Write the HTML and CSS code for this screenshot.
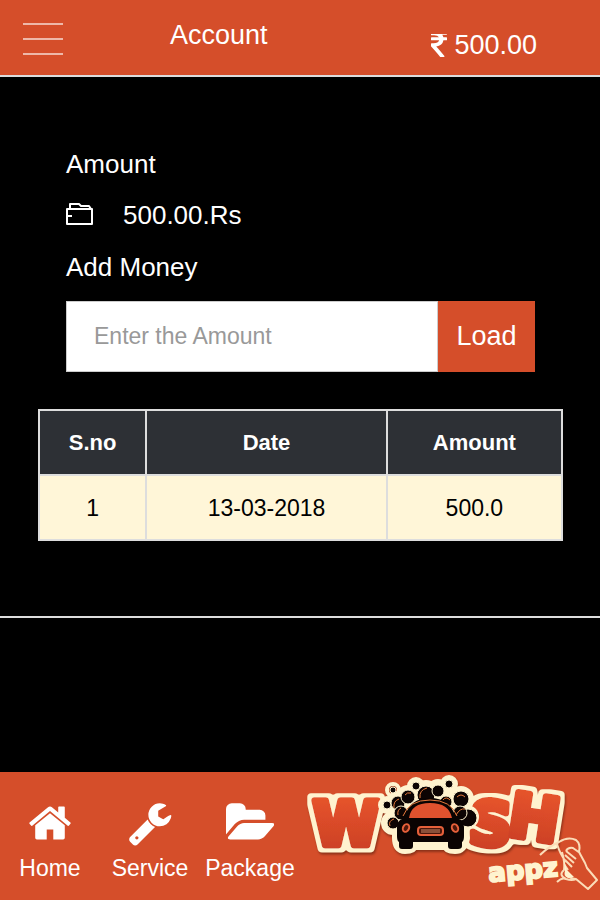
FILE: index.html
```
<!DOCTYPE html>
<html lang="en">
<head>
    <meta charset="UTF-8">
    <meta name="viewport" content="width=device-width, initial-scale=1.0">
    <title>Account</title>
    <link rel="stylesheet" href="styles.css">
</head>
<body>
    <header class="topbar">
        <button class="menu-button" type="button" aria-label="Menu">
            <span></span>
            <span></span>
            <span></span>
        </button>
        <h1>Account</h1>
        <div class="balance">
            <svg class="rupee" viewBox="447 256 898 1280" aria-hidden="true"><path d="M1345 470v102q0 14-9 23t-23 9h-168q-23 144-129 234t-276 110q167 178 459 536 14 16 4 34-8 18-29 18h-195q-16 0-25-12-306-367-498-571-9-9-9-22v-127q0-13 9.500-22.500t22.500-9.500h112q132 0 212.500-43t102.500-125h-427q-14 0-23-9t-9-23v-102q0-14 9-23t23-9h413q-57-113-268-113h-145q-13 0-22.500-9.500t-9.500-22.500v-133q0-14 9-23t23-9h832q14 0 23 9t9 23v102q0 14-9 23t-23 9h-233q47 61 64 144h171q14 0 23 9t9 23z"/></svg>
            <span>500.00</span>
        </div>
    </header>

    <main>
        <section class="wallet">
            <h2>Amount</h2>
            <p class="wallet-amount">
                <svg class="wallet-icon" viewBox="0 0 28 24" aria-hidden="true"><path d="M1 6H26V21H1ZM4 6V1H13L15 3H23L25 6M1 13H6"/></svg>
                500.00.Rs
            </p>
            <label for="amount">Add Money</label>
            <form class="load-form">
                <input type="text" id="amount" placeholder="Enter the Amount">
                <button type="button">Load</button>
            </form>
        </section>

        <!-- Past top-ups -->
        <table class="history">
            <thead>
                <tr>
                    <th class="col-no">S.no</th>
                    <th class="col-date">Date</th>
                    <th>Amount</th>
                </tr>
            </thead>
            <tbody>
                <tr>
                    <td>1</td>
                    <td>13-03-2018</td>
                    <td>500.0</td>
                </tr>
            </tbody>
        </table>
    </main>

    <footer class="bottombar">
        <nav>
            <a href="#home">
                <svg viewBox="0 0 1792 1792" aria-hidden="true"><path d="M1472 992v480q0 26-19 45t-45 19h-384v-384h-256v384h-384q-26 0-45-19t-19-45v-480q0-1 .5-3t.5-3l575-474 575 474q1 2 1 6zm223-69l-62 74q-8 9-21 11h-3q-13 0-21-7l-692-577-692 577q-12 8-24 7-13-2-21-11l-62-74q-8-10-7-23.500t11-21.500l719-599q32-26 76-26t76 26l244 204v-195q0-14 9-23t23-9h192q14 0 23 9t9 23v408l219 182q10 8 11 21.500t-7 23.500z"/></svg>
                Home
            </a>
            <a href="#service">
                <svg viewBox="0 0 1792 1792" aria-hidden="true"><path d="M448 1472q0-26-19-45t-45-19-45 19-19 45 19 45 45 19 45-19 19-45zm644-420l-682 682q-37 37-90 37-52 0-91-37l-106-108q-38-36-38-90 0-53 38-91l681-681q39 98 114.500 173.500t173.500 114.500zm634-435q0 39-23 106-47 134-164.500 217.500t-258.500 83.500q-185 0-316.500-131.500t-131.500-316.500 131.500-316.500 316.500-131.500q58 0 121.500 16.500t107.500 46.500q16 11 16 28t-16 28l-293 169v224l193 107q5-3 79-48.500t135.500-81 70.500-35.500q15 0 23.500 10t8.500 25z"/></svg>
                Service
            </a>
            <a href="#package">
                <svg viewBox="0 0 1879 1792" aria-hidden="true"><path d="M1879 952q0 31-31 66l-336 396q-43 51-120.500 86.500t-143.500 35.500h-1088q-34 0-60.500-13t-26.500-43q0-31 31-66l336-396q43-51 120.500-86.500t143.500-35.500h1088q34 0 60.500 13t26.500 43zm-343-344v160h-832q-94 0-197 47.500t-164 119.500l-337 396-5 6q0-4-.5-12.500t-.5-12.500v-960q0-92 66-158t158-66h320q92 0 158 66t66 158v32h544q92 0 158 66t66 158z"/></svg>
                Package
            </a>
        </nav>
        <svg class="logo" viewBox="0 0 300 128" role="img" aria-label="Wash Appz">
            <defs>
                <linearGradient id="letterFill" x1="0" y1="0" x2="0" y2="1">
                    <stop offset="0" stop-color="#ea572c"/>
                    <stop offset="1" stop-color="#c83d25"/>
                </linearGradient>
                <!-- Pale edge round the letters -->
                <filter id="letterEdge" x="-10%" y="-20%" width="120%" height="140%">
                    <feMorphology in="SourceAlpha" operator="dilate" radius="4"/>
                    <feGaussianBlur stdDeviation="1"/>
                    <feComponentTransfer result="edge">
                        <feFuncA type="linear" slope="3" intercept="-1"/>
                    </feComponentTransfer>
                    <feFlood flood-color="#fff3cf"/>
                    <feComposite in2="edge" operator="in" result="pale"/>
                    <feMerge>
                        <feMergeNode in="pale"/>
                        <feMergeNode in="SourceGraphic"/>
                    </feMerge>
                </filter>
            </defs>
            <g class="logo-shadow">
                <g class="logo-letters">
                    <text x="13" y="73">W</text>
                    <text x="169" y="73" transform="rotate(4 190 50)">S</text>
                    <text x="209" y="67" transform="rotate(9 235 48)">H</text>
                </g>
                <!-- Pale edge behind the bubbles and the car -->
                <g class="logo-edge">
                    <circle cx="93" cy="18" r="2"/>
                    <circle cx="87" cy="33" r="3"/>
                    <circle cx="98" cy="31" r="6"/>
                    <circle cx="108" cy="25" r="6"/>
                    <circle cx="116" cy="14" r="3"/>
                    <circle cx="126" cy="22" r="8"/>
                    <circle cx="138" cy="19" r="6"/>
                    <circle cx="149" cy="12" r="3"/>
                    <circle cx="161" cy="27" r="7"/>
                    <circle cx="167" cy="45" r="6"/>
                    <circle cx="93" cy="51" r="6"/>
                    <path d="M98 50L100 32L130 20L156 30L162 50L164 66Q162 76 155 76T147 72H113Q112 76 105 76T98 66Z"/>
                </g>
            </g>
            <g class="bubbles">
                <circle cx="93" cy="18" r="3"/>
                <circle cx="87" cy="33" r="4"/>
                <circle cx="98" cy="31" r="7"/>
                <circle cx="101" cy="41" r="7"/>
                <circle cx="93" cy="51" r="6"/>
                <circle cx="116" cy="14" r="4"/>
                <circle cx="126" cy="23" r="9"/>
                <circle cx="138" cy="19" r="6"/>
                <circle cx="146" cy="30" r="6"/>
                <circle cx="149" cy="12" r="4"/>
                <circle cx="168" cy="46" r="9"/>
                <circle cx="161" cy="27" r="8"/>
                <circle cx="160" cy="41" r="7"/>
                <circle cx="108" cy="25" r="7"/>
            </g>
            <path class="shine" d="M94 36Q93 29 99 27M98 43Q97 38 101 36M90 54Q88 49 94 47M120 26Q119 18 127 16M105 23Q107 20 111 21M157 25Q161 21 165 25M156 43Q160 36 165 37M143 28Q146 24 150 28"/>
            <path class="car" d="M97 55Q97 49 102 47L98 44Q100 41 105 44Q110 26 130 26T155 44Q160 41 163 44L159 47Q164 49 164 55V64Q164 69 162 70V74Q162 77 158 77H151Q148 77 148 74V70H113V74Q113 77 110 77H102Q99 77 99 74V70Q97 69 97 64Z"/>
            <path class="windshield" d="M109 46Q111 31 130 31T152 46Z"/>
            <path class="car-line" d="M103 44Q109 28 130 28T157 44"/>
            <ellipse class="lamp" cx="106" cy="56" rx="3" ry="4" transform="rotate(25 106 56)"/>
            <ellipse class="lamp" cx="155" cy="56" rx="3" ry="4" transform="rotate(-25 155 56)"/>
            <rect class="lamp" x="118" y="55" width="25" height="8" rx="3"/>
            <path class="grill" d="M121 58H140M121 60H140"/>
            <text class="logo-appz" x="189" y="110" transform="rotate(-5 190 110)">appz</text>
            <!-- Hand holding a cloth -->
            <path class="hand" d="M240 83Q248 75 259 70Q268 64 276 68Q281 72 279 80L285 91L287 96L297 108L288 117L276 107Q269 107 266 101M257 72Q260 82 266 90M266 79Q268 75 273 76L280 81M266 79L276 87M265 83L274 91M265 88L272 95M264 92L268 98M262 80Q265 90 264 98Q258 103 266 107Q272 109 276 107M257 110Q262 105 266 107"/>
            <path class="cloth" d="M264 88L267 98L274 105L268 106Q263 104 265 99Z"/>
        </svg>
    </footer>
</body>
</html>
```

FILE: styles.css
```
* {
    box-sizing: border-box;
}
body {
    margin: 0;
    min-height: 100vh;
    display: flex;
    flex-direction: column;
    background-color: #000;
    color: #fff;
    font-family: "Liberation Sans", Arial, sans-serif;
    font-size: 27px;
    line-height: 32px;
}
h1, h2, p {
    margin: 0;
    font-size: 27px;
    font-weight: normal;
}
button, input {
    font-family: inherit;
    border: none;
    border-radius: 0;
}

/* Top bar */
.topbar {
    display: flex;
    align-items: flex-start;
    height: 77px;
    padding: 0 63px 0 23px;
    background-color: #d54e2a;
    border-bottom: 2px solid #ddd;
}
.menu-button {
    display: flex;
    flex-direction: column;
    gap: 13px;
    width: 40px;
    margin-top: 23px;
    padding: 0;
    background: none;
    cursor: pointer;
}
.menu-button span {
    height: 2px;
    background-color: #eeb8a9;
}
.topbar h1 {
    margin: 19px 0 0 107px;
}
.balance {
    display: flex;
    align-items: center;
    gap: 7px;
    margin: 29px 0 0 auto;
}
.rupee {
    width: 16px;
    height: 23px;
    fill: #fff;
}

/* Wallet */
main {
    padding: 71px 37px 75px 38px;
    border-bottom: 2px solid #ddd;
}
.wallet {
    padding: 0 28px;
}
.wallet h2, .wallet-amount, .wallet label {
    font-size: 26px;
}
.wallet-amount {
    display: flex;
    align-items: center;
    gap: 29px;
    margin: 19px 0 20px;
}
.wallet-icon {
    width: 28px;
    height: 24px;
    fill: none;
    stroke: #fff;
    stroke-width: 2;
    stroke-linejoin: round;
}
.wallet label {
    display: block;
}
.load-form {
    display: flex;
    height: 71px;
    margin-top: 18px;
}
.load-form input {
    flex: 1;
    min-width: 0;
    padding: 0 27px;
    border: 1px solid #ccc;
    background-color: #fff;
    font-size: 23px;
}
.load-form input::placeholder {
    color: #999;
    opacity: 1;
}
.load-form button {
    width: 97px;
    padding: 0;
    background-color: #d54e2a;
    color: #fff;
    font-size: 27px;
    cursor: pointer;
}

/* History table */
.history {
    width: 100%;
    margin-top: 37px;
    border-collapse: collapse;
    table-layout: fixed;
    text-align: center;
    line-height: 28px;
}
.history th, .history td {
    height: 65px;
    padding: 0;
    border: 2px solid #ddd;
}
.history th {
    background-color: #2d3035;
    font-size: 22px;
}
.history td {
    background-color: #fff6d8;
    color: #000;
    font-size: 23px;
}
.col-no {
    width: 20.5%;
}
.col-date {
    width: 46%;
}

/* Bottom bar */
.bottombar {
    display: flex;
    height: 128px;
    margin-top: auto;
    background-color: #d54e2a;
}
.bottombar nav {
    flex: 1;
    display: grid;
    grid-template-columns: repeat(3, 1fr);
    padding-top: 28px;
}
.bottombar a {
    display: flex;
    flex-direction: column;
    align-items: center;
    gap: 6px;
    color: #fff;
    font-size: 23px;
    text-decoration: none;
}
.bottombar a svg {
    height: 46px;
    fill: #fff;
}

/* Logo */
.logo {
    flex: 1;
    min-width: 0;
    height: 128px;
}
.logo-shadow {
    filter: drop-shadow(1px 2px 1px #8c3219);
}
.logo-letters {
    font-family: "DejaVu Sans", sans-serif;
    font-weight: bold;
    font-size: 60px;
    fill: url(#letterFill);
    stroke: url(#letterFill);
    stroke-width: 7px;
    stroke-linejoin: round;
    filter: url(#letterEdge);
}
.logo-edge {
    fill: #fff3cf;
    stroke: #fff3cf;
    stroke-width: 12;
    stroke-linejoin: round;
}
.bubbles {
    fill: #0c0403;
    stroke: #fff3cf;
    stroke-width: 1;
}
.shine, .car-line {
    fill: none;
    stroke: #e5793c;
    stroke-width: 1;
}
.car {
    fill: #0a0302;
}
.windshield {
    fill: #e0522e;
}
.lamp {
    fill: #4a160b;
    stroke: #e5603a;
    stroke-width: 2;
}
.grill {
    stroke: #c98a68;
    stroke-width: 1;
}
.logo-appz {
    font-family: "DejaVu Sans", sans-serif;
    font-weight: bold;
    font-size: 26px;
    fill: #fff3cf;
    stroke: #fff3cf;
    stroke-width: 2px;
}
.hand {
    fill: none;
    stroke: #fbdcb8;
    stroke-width: 2;
    stroke-linejoin: round;
}
.cloth {
    fill: #fff3cf;
}
```
